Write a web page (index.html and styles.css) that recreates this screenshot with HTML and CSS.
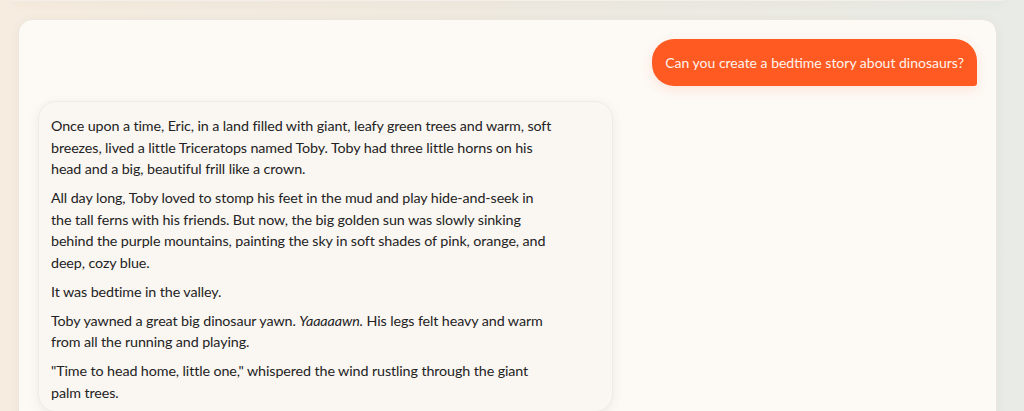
FILE: index.html
```html
<!DOCTYPE html>
<html lang="en">
<head>
<meta charset="utf-8">
<title>Bedtime story chat</title>
<link rel="stylesheet" href="styles.css">
</head>
<body>
<div class="page">
  <div class="prev-card"></div>
  <main class="chat-card">
    <div class="row row-user">
      <div class="bubble-user">Can you create a bedtime story about dinosaurs?</div>
    </div>
    <div class="row row-bot">
      <div class="bubble-bot">
        <p>Once upon a time, Eric, in a land filled with giant, leafy green trees and warm, soft breezes, lived a little Triceratops named Toby. Toby had three little horns on his head and a big, beautiful frill like a crown.</p>
        <p>All day long, Toby loved to stomp his feet in the mud and play hide-and-seek in the tall ferns with his friends. But now, the big golden sun was slowly sinking behind the purple mountains, painting the sky in soft shades of pink, orange, and deep, cozy blue.</p>
        <p>It was bedtime in the valley.</p>
        <p>Toby yawned a great big dinosaur yawn. <em>Yaaaaawn.</em> His legs felt heavy and warm from all the running and playing.</p>
        <p>"Time to head home, little one," whispered the wind rustling through the giant palm trees.</p>
      </div>
    </div>
  </main>
</div>
</body>
</html>
```
FILE: styles.css
```css
* { box-sizing: border-box; }
html, body { margin: 0; height: 100%; }
body {
  background: linear-gradient(90deg, #f6ecdf 0%, #efe9df 45%, #e8ebe6 100%);
  font-family: Lato, "Open Sans", sans-serif;
  color: #232323;
  overflow: hidden;
}
.page {
  display: flex;
  flex-direction: column;
  padding: 0 27px 0 18px;
}
.prev-card {
  height: 1px;
  margin: 0 -6px 18px -6px;
  background: #f4efe8;
  box-shadow: 0 2px 8px rgba(90, 80, 60, 0.18);
}
.chat-card {
  background: #fdf9f5;
  border: 1px solid #ebe6df;
  border-radius: 14px;
  padding: 19px 19px 0 19px;
  min-height: 420px;
  display: flex;
  flex-direction: column;
  gap: 15px;
  box-shadow: 0 2px 10px rgba(90, 80, 60, 0.06);
}
.row { display: flex; }
.row-user { justify-content: flex-end; }
.bubble-user {
  background: #ff5a22;
  color: #fff3ec;
  font-size: 14px;
  line-height: 20px;
  padding: 14px 13px 13px 13px;
  border-radius: 22px 22px 3px 22px;
  box-shadow: 0 4px 12px rgba(255, 90, 34, 0.12);
}
.bubble-bot {
  width: 575px;
  background: #faf6f2;
  border: 1px solid #efebe6;
  border-radius: 18px;
  padding: 13px 55px 0 12px;
  box-shadow: 0 3px 12px rgba(60, 50, 40, 0.08);
  font-size: 14.3px;
  line-height: 21.5px;
  letter-spacing: -0.1px;
}
.bubble-bot p { margin: 0 0 7.5px 0; }
.bubble-bot em { font-style: italic; }
```
